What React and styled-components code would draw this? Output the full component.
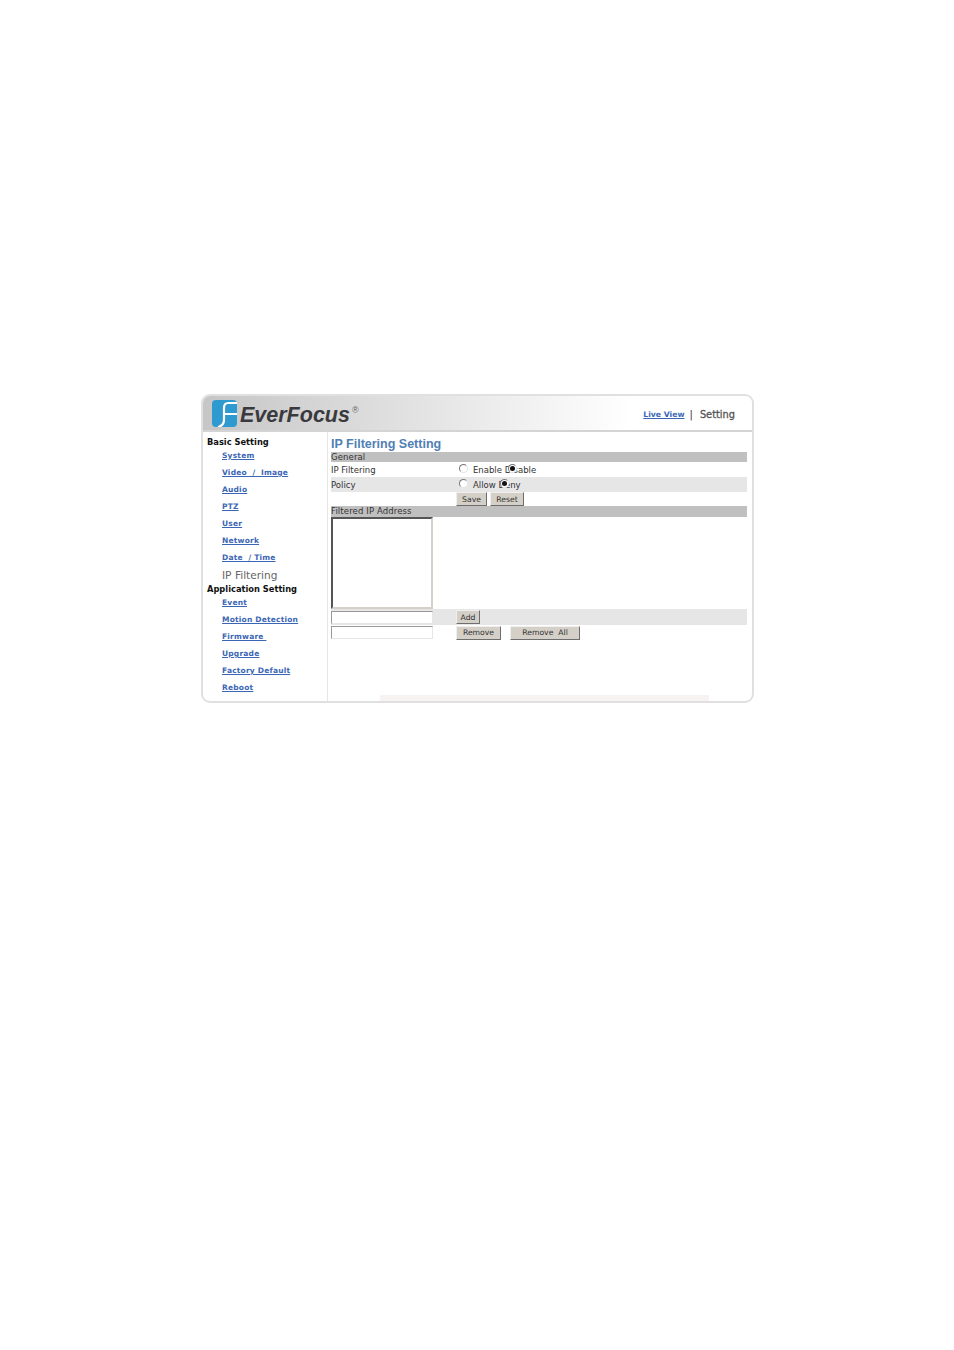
import React from 'react';
import styled, { createGlobalStyle } from 'styled-components';

const GlobalStyle = createGlobalStyle`
  html, body { margin: 0; padding: 0; background: #fff; }
  body { font-family: "DejaVu Sans", Verdana, sans-serif; }
`;

const Page = styled.div`
  width: 954px;
  height: 1350px;
  box-sizing: border-box;
  padding: 394px 0 0 201px;
  background: #fff;
`;

const Frame = styled.div`
  width: 553px;
  height: 309px;
  box-sizing: border-box;
  border: 2px solid #e0e0e0;
  border-radius: 9px;
  overflow: hidden;
  display: flex;
  flex-direction: column;
  position: relative;
`;

const Header = styled.header`
  height: 36px;
  flex: none;
  box-sizing: border-box;
  border-bottom: 2px solid #d4d4d4;
  background: linear-gradient(90deg, #c6c6c6 0%, #dcdcdc 30%, #f2f2f2 60%, #ffffff 78%);
  display: flex;
  align-items: center;
  padding: 0 17px 0 9px;
`;

const Logo = styled.div`
  display: flex;
  align-items: center;
  gap: 3px;
`;

const Brand = styled.span`
  font-family: "Liberation Sans", Arial, sans-serif;
  font-size: 21.5px;
  font-weight: 700;
  font-style: italic;
  color: #3a3a3e;
  line-height: 26px;
  margin-top: 3px;
`;

const Reg = styled.sup`
  font-family: "Liberation Sans", sans-serif;
  font-size: 9px;
  color: #666;
  align-self: flex-start;
  margin: 7px 0 0 -1px;
  line-height: 8px;
`;

const TopNav = styled.nav`
  margin-left: auto;
  display: flex;
  align-items: center;
  gap: 5px;
  padding-top: 3px;
`;

const TopLink = styled.a`
  font-size: 7.7px;
  font-weight: 700;
  color: #3b66b5;
  text-decoration: underline;
`;

const Sep = styled.span`
  font-size: 10px;
  color: #333;
  margin-right: 2px;
`;

const Current = styled.span`
  font-size: 9.8px;
  -webkit-text-stroke: 0.3px #555;
  color: #555;
`;

const Body = styled.div`
  flex: 1;
  display: flex;
  min-height: 0;
`;

const Sidebar = styled.aside`
  width: 125px;
  flex: none;
  box-sizing: border-box;
  border-right: 1px solid #e6e6e6;
  padding: 3px 0 0 4px;
  display: flex;
  flex-direction: column;
`;

const SideHeading = styled.div`
  font-size: 8.3px;
  font-weight: 700;
  color: #111;
  height: 14px;
  line-height: 14px;
  white-space: nowrap;
`;

const SideLink = styled.a`
  font-size: 7.5px;
  font-weight: 700;
  letter-spacing: 0.2px;
  color: #3b66b5;
  text-decoration: underline;
  margin-left: 15px;
  height: 17px;
  line-height: 14px;
  white-space: pre;
  align-self: flex-start;
`;

const SideCurrent = styled.div`
  font-size: 10.6px;
  color: #666;
  margin-left: 15px;
  height: 14px;
  line-height: 14px;
  white-space: nowrap;
`;

const Main = styled.main`
  flex: 1;
  box-sizing: border-box;
  padding: 4px 5px 0 3px;
  display: flex;
  flex-direction: column;
  position: relative;
`;

const Title = styled.h1`
  font-family: "Liberation Sans", Arial, sans-serif;
  font-size: 12.5px;
  font-weight: 700;
  color: #4f80b4;
  margin: 0;
  height: 16px;
  line-height: 16px;
  white-space: nowrap;
`;

const SectionBar = styled.div`
  height: ${p => p.$h || 10}px;
  line-height: 10px;
  background: #c0c0c0;
  font-size: 8.5px;
  letter-spacing: 0.12px;
  color: #333;
  white-space: nowrap;
`;

const Row = styled.div`
  display: flex;
  align-items: center;
  height: ${p => p.$h || 15}px;
  background: ${p => (p.$shade ? '#e6e6e6' : 'transparent')};
  font-size: 8.5px;
  color: #333;
  white-space: nowrap;
`;

const RowLabel = styled.div`
  width: ${p => p.$w || 126}px;
  flex: none;
`;

const Radios = styled.div`
  position: relative;
  display: flex;
  align-items: center;
  height: 100%;
`;

const Radio = styled.span`
  position: absolute;
  left: ${p => p.$x}px;
  top: 2px;
  width: 9px;
  height: 9px;
  box-sizing: border-box;
  border-radius: 50%;
  border: 1px solid;
  border-color: #777 #e4e4e4 #e4e4e4 #777;
  background: #fff;
  &::after {
    content: '';
    display: ${p => (p.$on ? 'block' : 'none')};
    width: 5px;
    height: 5px;
    margin: 1px;
    border-radius: 50%;
    background: #111;
  }
`;

const RadioText = styled.span`
  margin-left: ${p => p.$ml}px;
`;

const Button = styled.button`
  font-family: "DejaVu Sans", Verdana, sans-serif;
  font-size: 7.7px;
  color: #333;
  width: ${p => p.$w}px;
  height: 14px;
  padding: 0;
  margin: 0 ${p => p.$mr || 0}px 0 0;
  background: #d4d0c8;
  border: 1px solid;
  border-color: #efefef #6e6e6e #6e6e6e #efefef;
  white-space: pre;
`;

const ListBox = styled.div`
  width: 102px;
  height: 92px;
  box-sizing: border-box;
  background: #fff;
  border: 2px solid;
  border-color: #555 #d4d0c8 #d4d0c8 #555;
`;

const TextInput = styled.input`
  width: 102px;
  height: 13px;
  box-sizing: border-box;
  padding: 0;
  background: #fff;
  border: 1px solid;
  border-color: #999 #e6e6e6 #e6e6e6 #999;
`;

const InputCell = styled.div`
  width: 125px;
  flex: none;
  display: flex;
  align-items: center;
`;

const BottomStrip = styled.div`
  position: absolute;
  left: 52px;
  bottom: 0;
  width: 329px;
  height: 6px;
  background: #f8f3f3;
`;

const LogoMark = () => (
  <svg width="25" height="27" viewBox="0 0 25 27">
    <rect x="0" y="0" width="25" height="27" rx="4" fill="#2e9ad0" />
    <path d="M25 3 H16 C13 3 12 5 12 8 V20 C12 23 10 26 6 27 M12 14 H25" fill="none" stroke="#fff" strokeWidth="2.2" />
  </svg>
);

const basicLinks = ['System', 'Video  /  Image', 'Audio', 'PTZ', 'User', 'Network', 'Date  / Time'];
const appLinks = ['Event', 'Motion Detection', 'Firmware ', 'Upgrade', 'Factory Default', 'Reboot'];

export default function App() {
  return (
    <Page>
      <GlobalStyle />
      <Frame>
        <Header>
          <Logo>
            <LogoMark />
            <Brand>EverFocus</Brand>
            <Reg>®</Reg>
          </Logo>
          <TopNav>
            <TopLink>Live View</TopLink>
            <Sep>|</Sep>
            <Current>Setting</Current>
          </TopNav>
        </Header>
        <Body>
          <Sidebar>
            <SideHeading>Basic Setting</SideHeading>
            {basicLinks.map(l => <SideLink key={l}>{l}</SideLink>)}
            <SideCurrent>IP Filtering</SideCurrent>
            <SideHeading>Application Setting</SideHeading>
            {appLinks.map(l => <SideLink key={l}>{l}</SideLink>)}
          </Sidebar>
          <Main>
            <Title>IP Filtering Setting</Title>
            <SectionBar>General</SectionBar>
            <Row>
              <RowLabel>IP Filtering</RowLabel>
              <Radios>
                <Radio $x={2} />
                <RadioText $ml={16}>Enable Disable</RadioText>
                <Radio $x={51} $on />
              </Radios>
            </Row>
            <Row $shade>
              <RowLabel>Policy</RowLabel>
              <Radios>
                <Radio $x={2} />
                <RadioText $ml={16}>Allow Deny</RadioText>
                <Radio $x={43} $on />
              </Radios>
            </Row>
            <Row $h={14}>
              <RowLabel $w={125} />
              <Button $w={31} $mr={3}>Save</Button>
              <Button $w={34}>Reset</Button>
            </Row>
            <SectionBar $h={11}>Filtered IP Address</SectionBar>
            <ListBox />
            <Row $shade $h={16}>
              <InputCell><TextInput /></InputCell>
              <Button $w={24}>Add</Button>
            </Row>
            <Row>
              <InputCell><TextInput /></InputCell>
              <Button $w={45} $mr={9}>Remove</Button>
              <Button $w={70}>Remove  All</Button>
            </Row>
            <BottomStrip />
          </Main>
        </Body>
      </Frame>
    </Page>
  );
}
